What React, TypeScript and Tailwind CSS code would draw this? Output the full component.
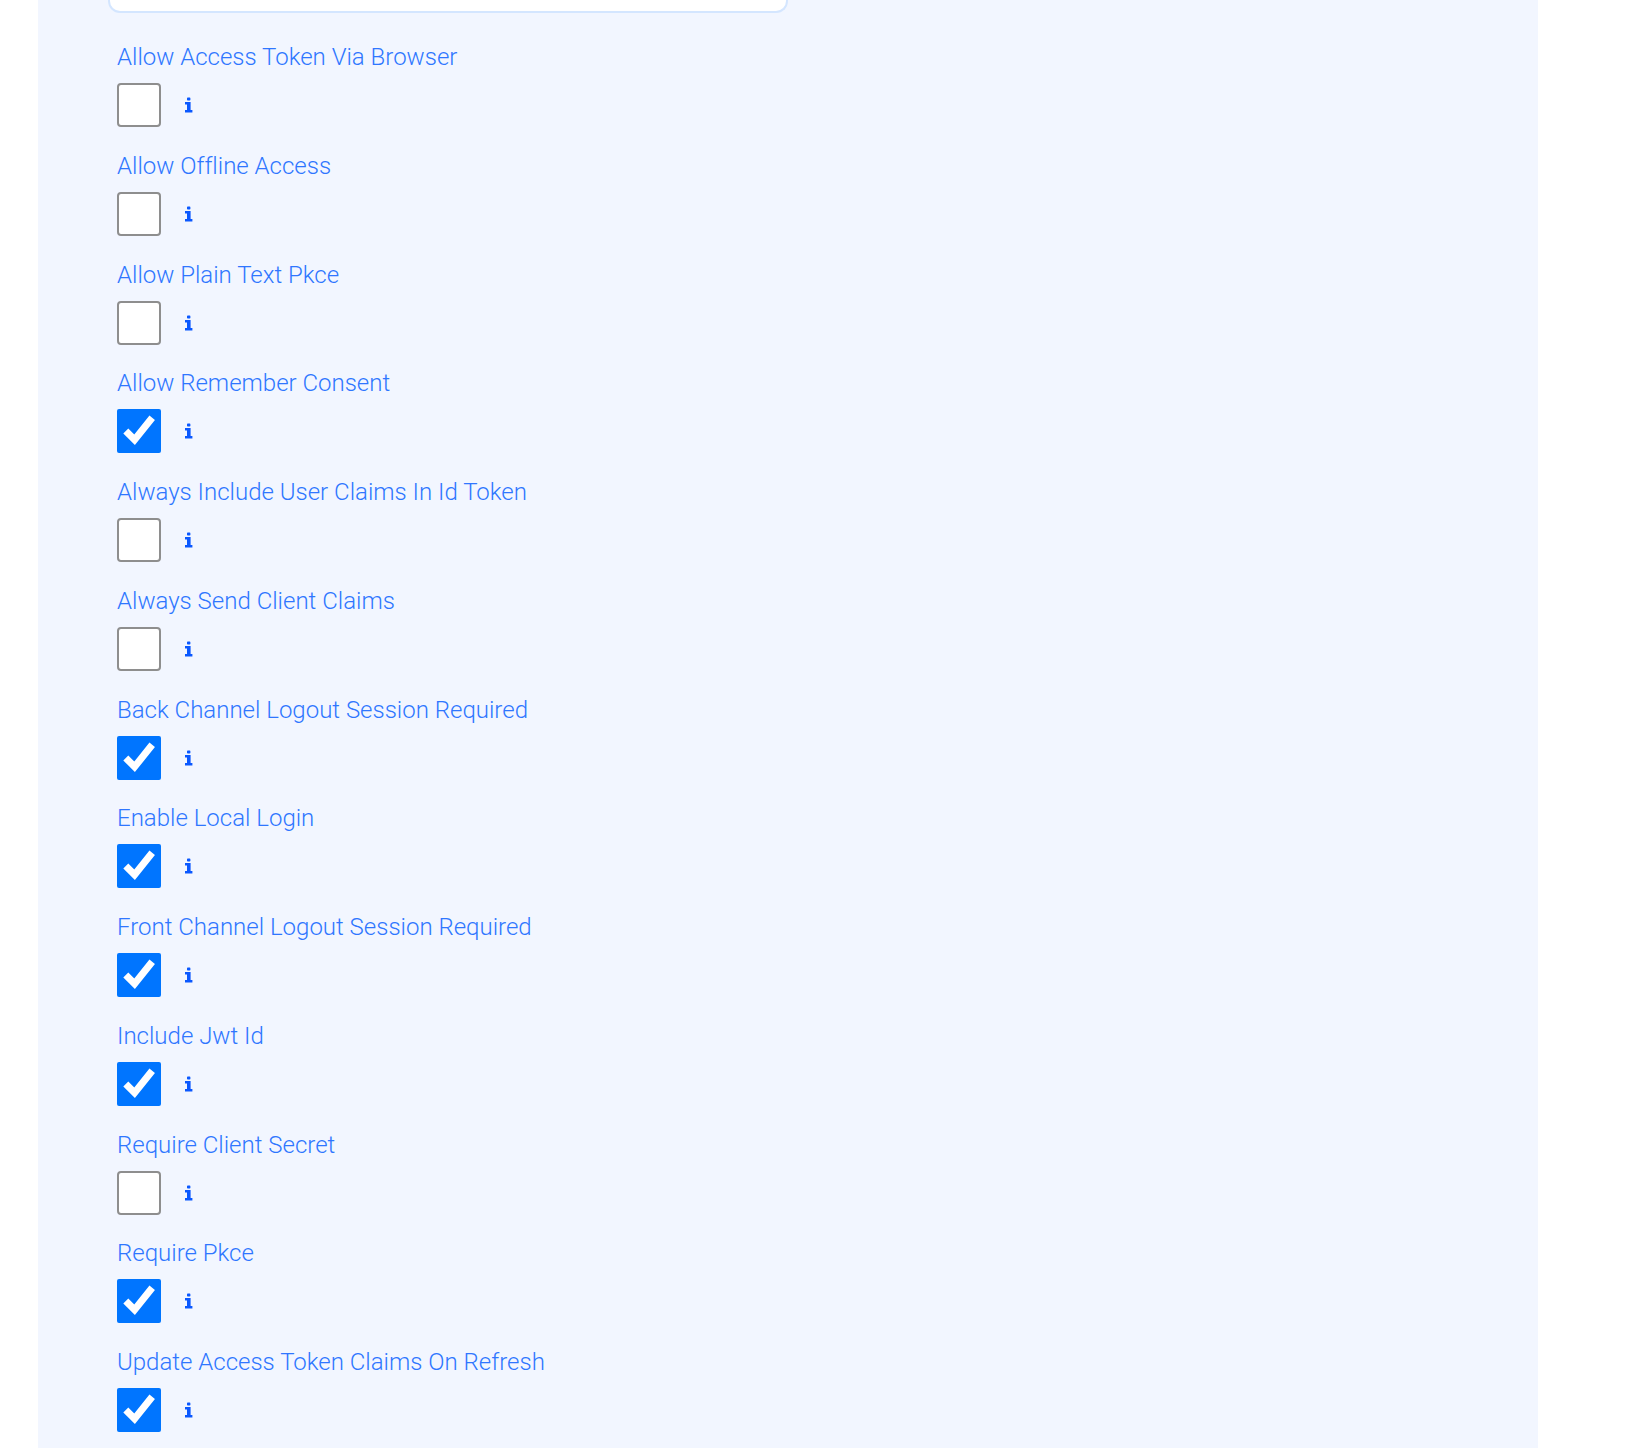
import { useState } from "react";

const OPTIONS: { label: string; checked: boolean }[] = [
  { label: "Allow Access Token Via Browser", checked: false },
  { label: "Allow Offline Access", checked: false },
  { label: "Allow Plain Text Pkce", checked: false },
  { label: "Allow Remember Consent", checked: true },
  { label: "Always Include User Claims In Id Token", checked: false },
  { label: "Always Send Client Claims", checked: false },
  { label: "Back Channel Logout Session Required", checked: true },
  { label: "Enable Local Login", checked: true },
  { label: "Front Channel Logout Session Required", checked: true },
  { label: "Include Jwt Id", checked: true },
  { label: "Require Client Secret", checked: false },
  { label: "Require Pkce", checked: true },
  { label: "Update Access Token Claims On Refresh", checked: true },
];

function InfoIcon() {
  return (
    <svg viewBox="0 0 8 16" className="h-4 w-2" fill="currentColor" aria-hidden="true">
      <path d="M2 1.4Q2 .6 2.8.6H4.6Q5.4.6 5.4 1.4V2.8Q5.4 3.6 4.6 3.6H2.8Q2 3.6 2 2.8ZM0 5H5.6V12.9H7.4V15.4H-.2V12.9H2V7.5H0Z" />
    </svg>
  );
}

function Option({ label, checked }: { label: string; checked: boolean }) {
  const [on, setOn] = useState(checked);
  const id = label.toLowerCase().replaceAll(" ", "-");
  return (
    <li className="flex flex-col gap-[10px]">
      <label
        htmlFor={id}
        className="text-2xl leading-8 font-light text-[#2f76ff] [font-variant-ligatures:none]"
      >
        {label}
      </label>
      <div className="flex items-center gap-6">
        <input
          id={id}
          type="checkbox"
          checked={on}
          onChange={(e) => setOn(e.target.checked)}
          className="size-11 rounded-[4px] border-2 border-[#8e8e8e] bg-white not-checked:appearance-none"
        />
        <button type="button" aria-label={`About ${label}`} className="text-[#0a58ff]">
          <InfoIcon />
        </button>
      </div>
    </li>
  );
}

export default function App() {
  return (
    <div className="min-h-screen bg-white pr-[103px] pl-[38px] font-['Roboto',sans-serif]">
      <main className="flex min-h-screen flex-col bg-[#f2f6ff] px-[70px] pb-4">
        <input
          type="text"
          aria-label="Value"
          className="h-[13px] w-full max-w-[680px] rounded-b-xl border-2 border-t-0 border-[#d4e6ff] bg-white px-4"
        />
        <ul className="mt-7 flex flex-1 flex-col justify-between pl-[9px]">
          {OPTIONS.map((o) => (
            <Option key={o.label} {...o} />
          ))}
        </ul>
      </main>
    </div>
  );
}
